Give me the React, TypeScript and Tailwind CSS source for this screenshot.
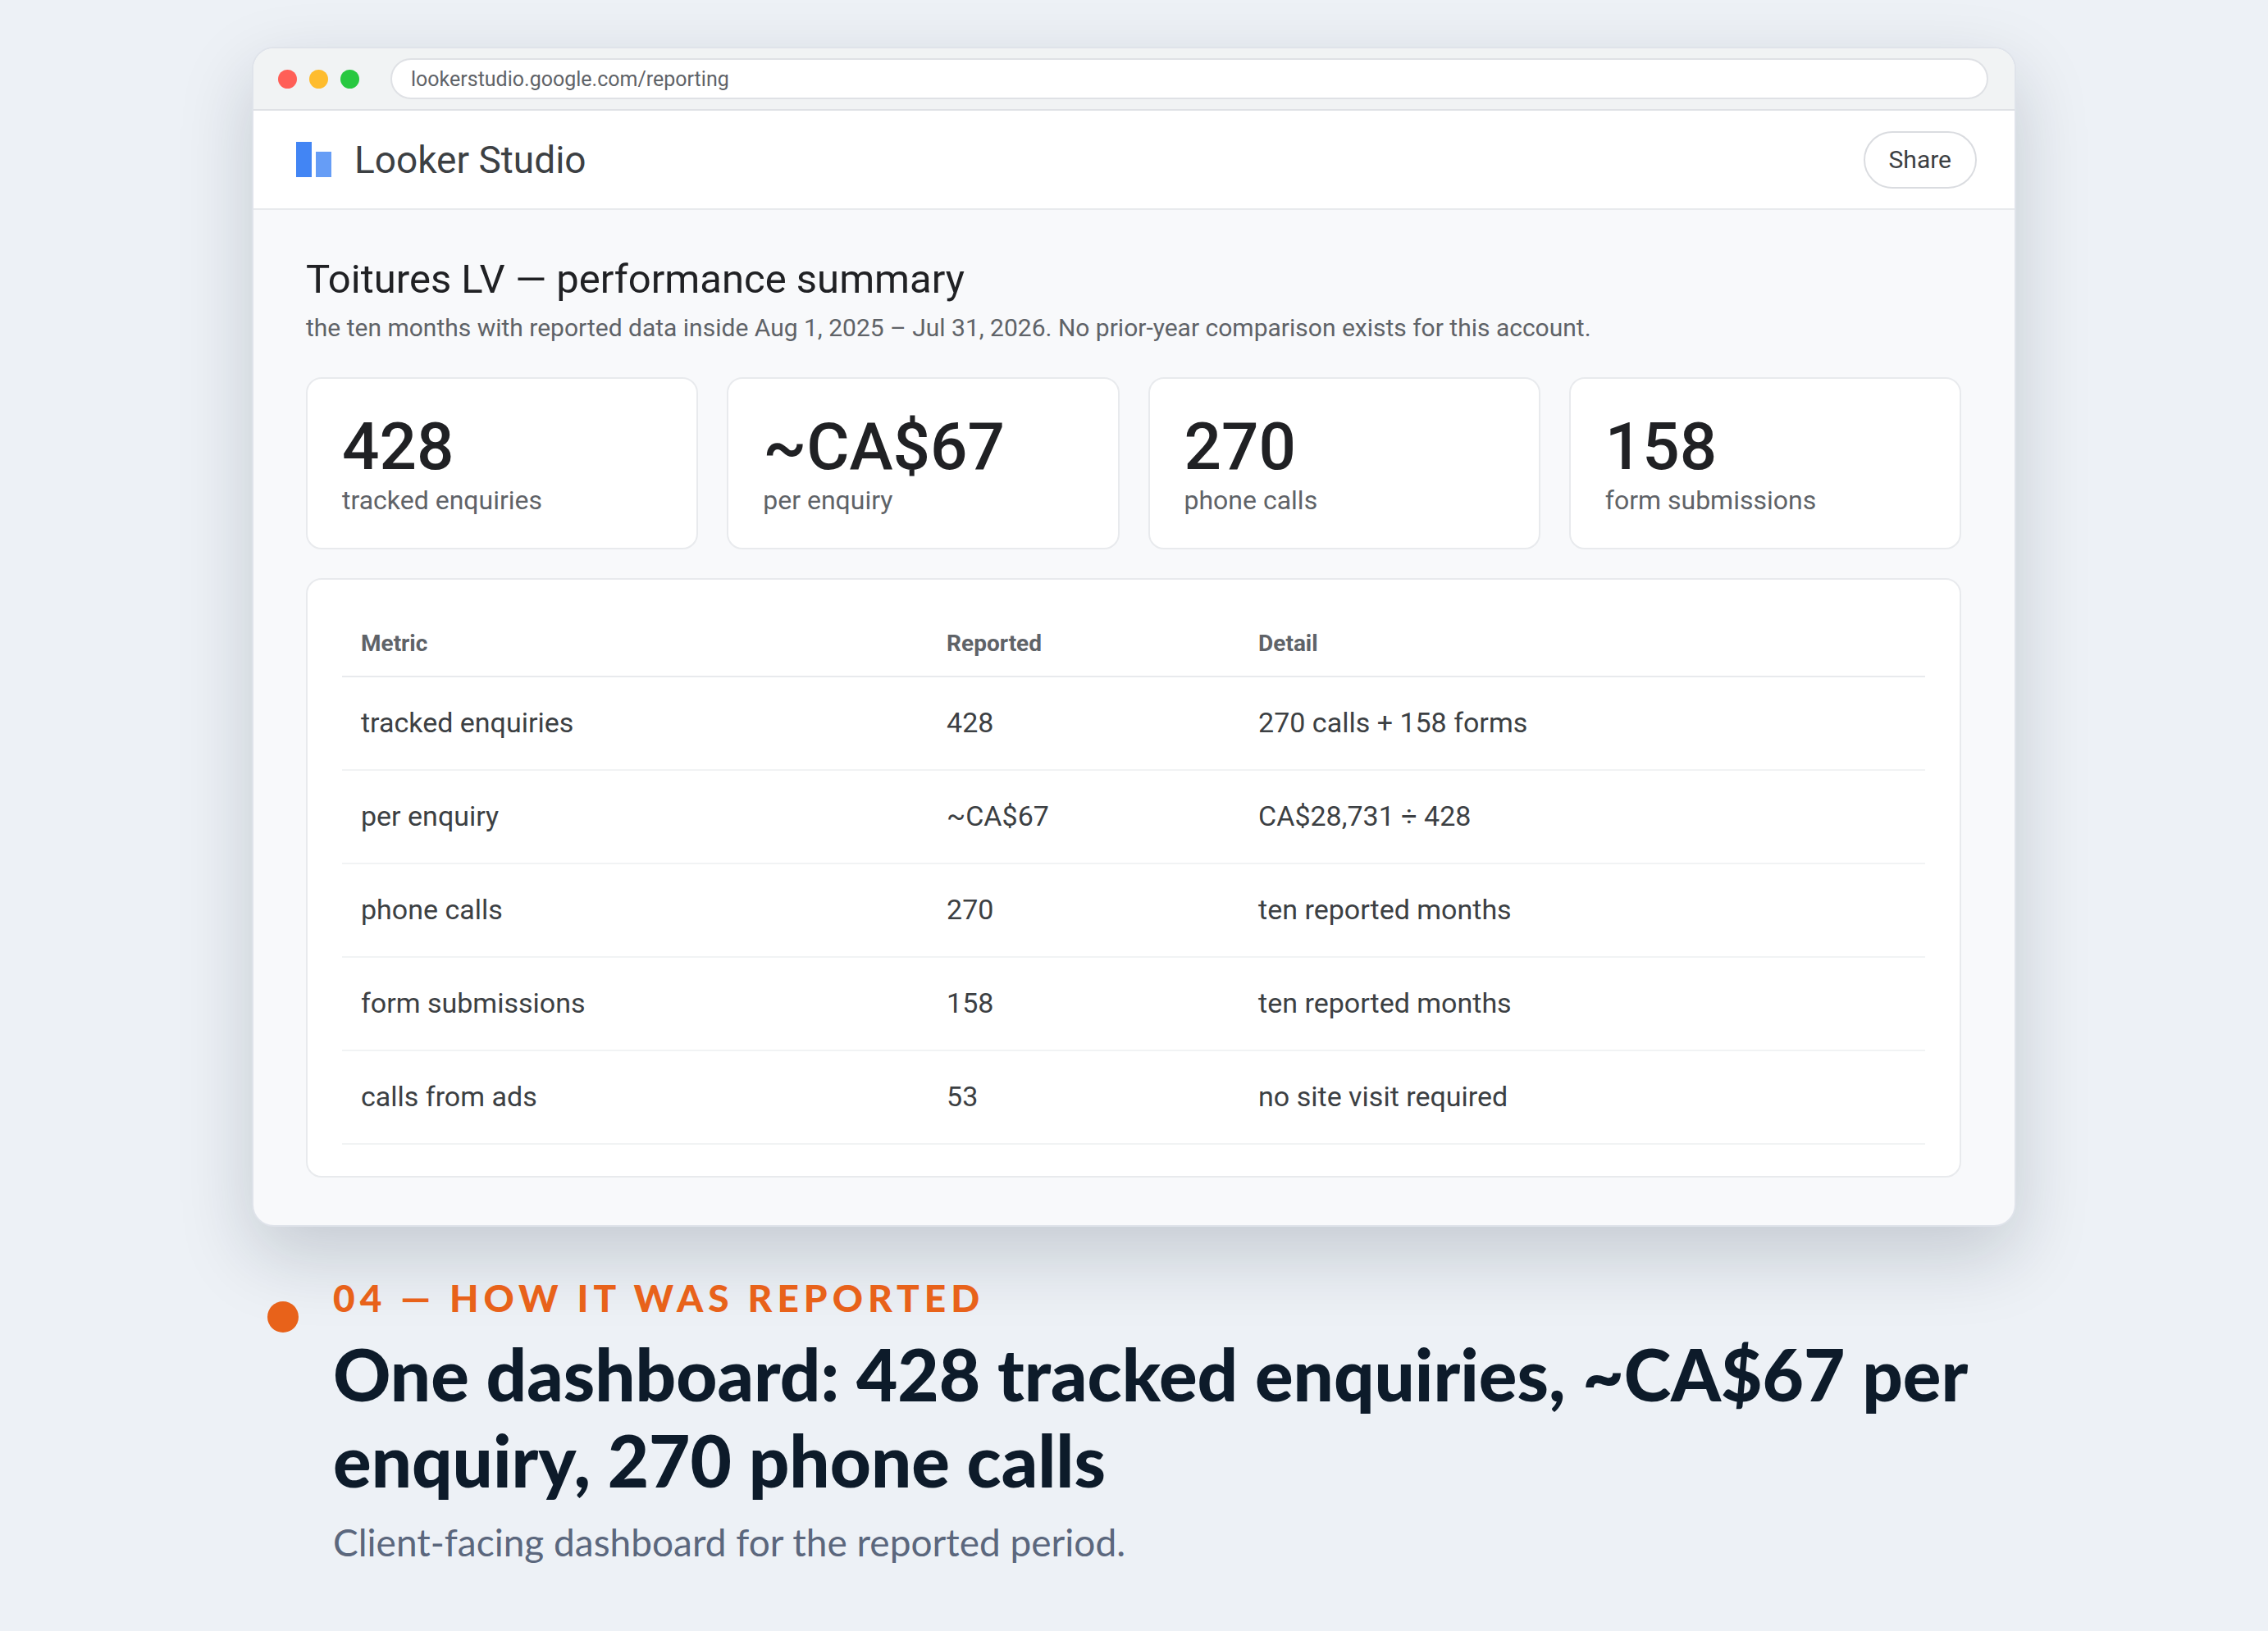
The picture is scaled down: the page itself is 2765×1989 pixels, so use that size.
const stats = [
  { value: "428", label: "tracked enquiries" },
  { value: "~CA$67", label: "per enquiry" },
  { value: "270", label: "phone calls" },
  { value: "158", label: "form submissions" },
];

const rows = [
  { metric: "tracked enquiries", reported: "428", detail: "270 calls + 158 forms" },
  { metric: "per enquiry", reported: "~CA$67", detail: "CA$28,731 ÷ 428" },
  { metric: "phone calls", reported: "270", detail: "ten reported months" },
  { metric: "form submissions", reported: "158", detail: "ten reported months" },
  { metric: "calls from ads", reported: "53", detail: "no site visit required" },
];

function BrowserBar() {
  return (
    <div className="flex items-center border-b-2 border-[#dfe1e5] bg-[#f1f3f4] py-3 pr-8 pl-[30px]">
      <div className="flex gap-[15px]" aria-hidden="true">
        <span className="size-[23px] rounded-full bg-[#ff5f57]" />
        <span className="size-[23px] rounded-full bg-[#febc2e]" />
        <span className="size-[23px] rounded-full bg-[#28c840]" />
      </div>
      <input
        type="text"
        readOnly
        aria-label="Address"
        value="lookerstudio.google.com/reporting"
        className="ml-[38px] h-[50px] min-w-0 flex-1 rounded-full border-2 border-[#dfe1e5] bg-white px-[23px] text-[25px] text-[#5f6368] outline-none"
      />
    </div>
  );
}

function AppHeader() {
  return (
    <header className="flex h-[121px] items-center border-b-2 border-[#e8eaed] bg-white pr-[46px] pl-[52px]">
      <svg className="h-[43px] w-[43px]" viewBox="0 0 43 43" aria-hidden="true">
        <rect x="0" y="0" width="19" height="43" fill="#4285f4" />
        <rect x="24" y="12" width="19" height="31" fill="#669df6" />
      </svg>
      <span className="ml-7 text-[46px] leading-[54px] text-[#3c4043]">Looker Studio</span>
      <button
        type="button"
        className="ml-auto h-[70px] rounded-full border-2 border-[#dadce0] bg-white px-[29px] text-[30px] text-[#3c4043]"
      >
        Share
      </button>
    </header>
  );
}

function StatCard({ value, label }: { value: string; label: string }) {
  return (
    <div className="rounded-[19px] border-2 border-[#e8eaed] bg-white px-[42px] pt-[39px] pb-[37px]">
      <p className="text-[80px] leading-[88px] font-medium text-[#202124]">{value}</p>
      <p className="text-[32px] leading-[42px] text-[#5f6368]">{label}</p>
    </div>
  );
}

function MetricsTable() {
  return (
    <div className="mt-[35px] rounded-[19px] border-2 border-[#e8eaed] bg-white px-[42px] py-[38px]">
      <table className="w-full table-fixed border-collapse text-left">
        <colgroup>
          <col className="w-[37%]" />
          <col className="w-[380px]" />
          <col />
        </colgroup>
        <thead>
          <tr className="h-[80px] border-b-2 border-[#e8eaed] text-[28px] leading-[34px] text-[#5f6368]">
            <th scope="col" className="px-[23px] font-bold">Metric</th>
            <th scope="col" className="px-[23px] font-bold">Reported</th>
            <th scope="col" className="px-[23px] font-bold">Detail</th>
          </tr>
        </thead>
        <tbody>
          {rows.map((row) => (
            <tr
              key={row.metric}
              className="h-[114px] border-b-2 border-[#f1f3f4] text-[34px] leading-[40px] text-[#3c4043]"
            >
              <td className="px-[23px] pb-0.5">{row.metric}</td>
              <td className="px-[23px] pb-0.5">{row.reported}</td>
              <td className="px-[23px] pb-0.5">{row.detail}</td>
            </tr>
          ))}
        </tbody>
      </table>
    </div>
  );
}

export default function App() {
  return (
    <div className="min-h-screen bg-[#edf1f6] px-8 pt-[57px] pb-16 font-['Roboto',sans-serif]">
      <main className="mx-auto w-full max-w-[2151px]">
        <section className="overflow-hidden rounded-[27px] border-2 border-[#dfe3ea] bg-[#f8f9fb] shadow-[0_34px_90px_rgba(13,27,42,0.18)]">
          <BrowserBar />
          <AppHeader />
          <div className="pt-14 pr-[65px] pb-[58px] pl-16">
            <h1 className="text-[49px] leading-[58px] text-[#202124]">Toitures LV — performance summary</h1>
            <p className="mt-3 text-[30px] leading-[36px] text-[#5f6368]">
              the ten months with reported data inside Aug 1, 2025 – Jul 31, 2026. No prior-year comparison exists for
              this account.
            </p>
            <div className="mt-[42px] grid grid-cols-4 gap-[35px]">
              {stats.map((stat) => (
                <StatCard key={stat.label} value={stat.value} label={stat.label} />
              ))}
            </div>
            <MetricsTable />
          </div>
        </section>

        <section className="mt-[59px] flex pl-[19px] font-['Lato',sans-serif]">
          <span className="mt-8 size-[38px] shrink-0 rounded-full bg-[#e8621a]" aria-hidden="true" />
          <div className="ml-[42px]">
            <p className="text-[46px] leading-[56px] font-black tracking-[6px] text-[#e8621a]">
              04 — HOW IT WAS REPORTED
            </p>
            <h2 className="mt-3 text-[87px] leading-[105px] font-black text-[#0d1b2a]">
              One dashboard: 428 tracked enquiries, ~CA$67 per enquiry, 270 phone calls
            </h2>
            <p className="mt-4 text-[46px] leading-[64px] text-[#5b677d]">
              Client-facing dashboard for the reported period.
            </p>
          </div>
        </section>
      </main>
    </div>
  );
}
